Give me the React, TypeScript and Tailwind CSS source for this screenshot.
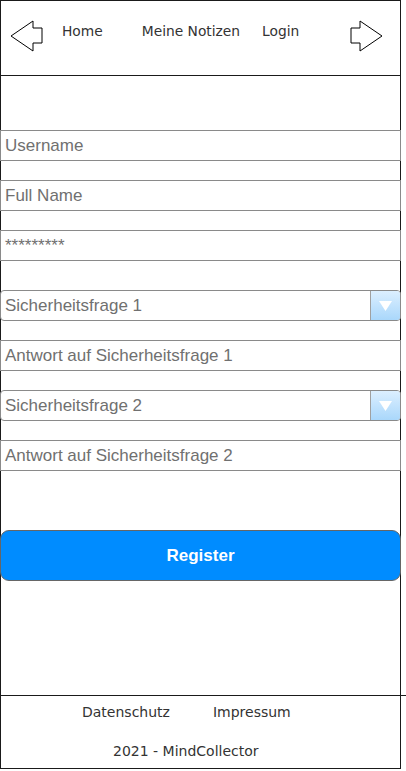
import React from 'react';

const sans = "font-['Liberation_Sans',Arial,sans-serif]";
const sketch = "font-['DejaVu_Sans',Verdana,sans-serif]";

function ArrowLeft() {
  return (
    <svg width="34" height="34" viewBox="8 19 34 34" className="shrink-0">
      <polygon points="10,36 32,21 32,28 41,28 41,43 32,43 32,51" fill="white" stroke="black" strokeWidth="1" />
    </svg>
  );
}

function ArrowRight() {
  return (
    <svg width="34" height="34" viewBox="349 19 34 34" className="shrink-0">
      <polygon points="381,36 359,21 359,28 350,28 350,43 359,43 359,51" fill="white" stroke="black" strokeWidth="1" />
    </svg>
  );
}

function Field({ label, className = '' }: { label: string; className?: string }) {
  return (
    <div
      className={`-mx-px flex h-[31px] items-center border border-[#8a8a8a] bg-white pl-[4px] text-[17px] text-[#707070] ${sans} ${className}`}
    >
      {label}
    </div>
  );
}

function Select({ label, className = '' }: { label: string; className?: string }) {
  return (
    <div
      className={`-mx-px flex h-[31px] items-stretch overflow-hidden rounded-[4px] border border-[#8a8a8a] bg-white text-[17px] text-[#707070] ${sans} ${className}`}
    >
      <div className="flex flex-1 items-center pl-[4px]">{label}</div>
      <div className="flex w-[30px] items-center justify-center border-l border-[#a0a0a0] bg-gradient-to-b from-[#dcefff] to-[#a9d7fb]">
        <svg width="13" height="10" viewBox="0 0 13 10">
          <polygon points="0,0 13,0 6.5,10" fill="white" />
        </svg>
      </div>
    </div>
  );
}

export default function App() {
  return (
    <div className="h-[771px] w-[406px] overflow-hidden bg-white">
      <div className="flex h-[769px] w-[401px] flex-col border border-[#1a1a1a]">
        <header className={`flex h-[75px] shrink-0 items-start border-b border-[#1a1a1a] pl-[8px] pr-[16px] pt-[18px] text-[13.8px] text-[#333] ${sketch}`}>
          <ArrowLeft />
          <span className="ml-[19px] mt-[3px] leading-[18px]">Home</span>
          <span className="ml-[39px] mt-[3px] leading-[18px]">Meine Notizen</span>
          <span className="ml-[22px] mt-[3px] leading-[18px]">Login</span>
          <div className="ml-auto">
            <ArrowRight />
          </div>
        </header>

        <main className="flex flex-1 flex-col pt-[54px]">
          <Field label="Username" />
          <Field label="Full Name" className="mt-[19px]" />
          <Field label="*********" className="mt-[19px]" />
          <Select label="Sicherheitsfrage 1" className="mt-[29px]" />
          <Field label="Antwort auf Sicherheitsfrage 1" className="mt-[19px]" />
          <Select label="Sicherheitsfrage 2" className="mt-[19px]" />
          <Field label="Antwort auf Sicherheitsfrage 2" className="mt-[19px]" />
          <button
            className={`-mx-px mt-[59px] h-[51px] rounded-[9px] border border-[#666] bg-[#008cff] text-[17px] font-bold text-white ${sans}`}
          >
            Register
          </button>
        </main>

        <footer className={`-mr-[6px] h-[73px] shrink-0 border-t border-[#1a1a1a] text-[14px] text-[#333] ${sketch}`}>
          <div className="flex pl-[81px] pt-[7px] leading-[18px]">
            <span>Datenschutz</span>
            <span className="ml-[43px]">Impressum</span>
          </div>
          <div className="pl-[112px] pt-[21px] leading-[18px]">2021 - MindCollector</div>
        </footer>
      </div>
    </div>
  );
}
